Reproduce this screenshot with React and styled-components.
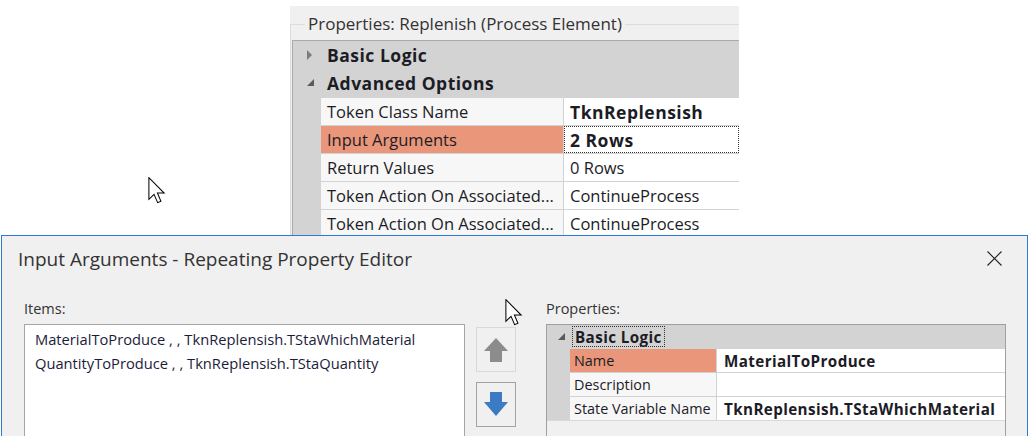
import React from "react";
import styled, { createGlobalStyle } from "styled-components";

const GlobalStyle = createGlobalStyle`
  html, body { margin: 0; padding: 0; background: #fff; }
  body {
    font-family: "Open Sans", "Noto Sans", sans-serif;
    color: #222;
  }
  #root { width: 1033px; height: 436px; }
`;

const LARGE = {
  cat: 28, row: 28, gutter: 27, label: 242,
  font: 16.5, bold: 17.5, ls: 0.5,
  labelPad: 6, valuePad: 6, indent: 14, slot: 20,
};
const SMALL = {
  cat: 23, row: 24, gutter: 22, label: 146,
  font: 14.4, bold: 15.2, ls: 0.4,
  labelPad: 4, valuePad: 7, indent: 11, slot: 14,
};

const Page = styled.div`
  position: relative;
  width: 1033px;
  height: 436px;
  overflow: hidden;
  background: #fff;
  display: flex;
  flex-direction: column;
`;

const TopArea = styled.div`
  flex: none;
  height: 235px;
  display: flex;
  padding-left: 290px;
  box-sizing: border-box;
`;

const PropertiesPanel = styled.div`
  width: 449px;
  margin-top: 6px;
  padding-top: 8px;
  box-sizing: border-box;
  background: #f0f0f0;
  overflow: hidden;
`;

const GroupBox = styled.fieldset`
  margin: 0;
  padding: 6px 0 0 1px;
  min-width: 0;
  height: 100%;
  box-sizing: border-box;
  border: none;
  border-top: 1px solid #dcdcdc;
  border-left: 1px solid #dcdcdc;
`;

const GroupTitle = styled.legend`
  margin-left: 13px;
  padding: 0 3px;
  font-size: 17px;
  line-height: 20px;
  color: #333;
  white-space: nowrap;
`;

const Grid = styled.div`
  background: #d3d3d3;
  border: 1px solid ${(p) => (p.$s === SMALL ? "#a0a0a0" : "#a9a9a9")};
  border-right: ${(p) => (p.$s === SMALL ? "1px solid #a0a0a0" : "none")};
  border-bottom: none;
  color: #1c1c26;
  white-space: nowrap;
`;

const CategoryRow = styled.div`
  display: flex;
  align-items: center;
  height: ${(p) => p.$s.cat}px;
  padding-left: ${(p) => p.$s.indent}px;
  font-size: ${(p) => p.$s.bold}px;
  font-weight: 700;
  letter-spacing: ${(p) => p.$s.ls}px;
`;

const ArrowSlot = styled.span`
  display: flex;
  align-items: center;
  width: ${(p) => p.$s.slot}px;
  flex: none;
`;

const CategoryLabel = styled.span`
  display: flex;
  align-items: center;
  height: ${(p) => p.$s.cat - 2}px;
  padding: 0 ${(p) => (p.$focused ? 3 : 0)}px;
  outline: ${(p) => (p.$focused ? "1px dotted #333" : "none")};
  outline-offset: -1px;
`;

const PropRow = styled.div`
  display: grid;
  grid-template-columns: ${(p) => p.$s.gutter}px ${(p) => p.$s.label}px 1fr;
  column-gap: 1px;
  height: ${(p) => p.$s.row}px;
  padding-top: 1px;
  box-sizing: border-box;
  background: #d3d3d3;
  font-size: ${(p) => p.$s.font}px;
`;

const Gutter = styled.div``;

const LabelCell = styled.div`
  display: flex;
  align-items: center;
  padding-left: ${(p) => p.$s.labelPad}px;
  background: ${(p) => (p.$selected ? "#e9967a" : "#f7f7f7")};
  overflow: hidden;
`;

const ValueCell = styled.div`
  display: flex;
  align-items: center;
  padding-left: ${(p) => p.$s.valuePad}px;
  background: #fff;
  overflow: hidden;
  font-weight: ${(p) => (p.$bold ? 700 : 400)};
  font-size: ${(p) => (p.$bold ? p.$s.bold : p.$s.font)}px;
  letter-spacing: ${(p) => (p.$bold ? p.$s.ls : 0)}px;
  outline: ${(p) => (p.$focused ? "1px dotted #333" : "none")};
  outline-offset: -1px;
`;

const GridFiller = styled.div`
  height: 40px;
  background: #f0f0f0;
  border-top: 1px solid #d8d8d8;
`;

const Dialog = styled.div`
  flex: none;
  width: 1027px;
  height: 220px;
  margin-left: 1px;
  box-sizing: border-box;
  border: 1px solid #2d7bd0;
  background: #f0f0f0;
  display: flex;
  flex-direction: column;
`;

const TitleBar = styled.div`
  display: flex;
  align-items: center;
  height: 45px;
  flex: none;
  padding-left: 16px;
`;

const Title = styled.div`
  flex: 1;
  font-size: 19px;
  color: #333;
  white-space: nowrap;
`;

const CloseButton = styled.div`
  width: 46px;
  height: 45px;
  margin-right: 10px;
  display: flex;
  align-items: center;
  justify-content: center;
`;

const DialogBody = styled.div`
  display: flex;
  align-items: flex-start;
  padding: 18px 0 0 22px;
`;

const Column = styled.div`
  display: flex;
  flex-direction: column;
  width: ${(p) => p.$w}px;
  flex: none;
`;

const FieldLabel = styled.div`
  font-size: 14.5px;
  line-height: 20px;
  height: 20px;
  margin-bottom: 5px;
  color: #333;
`;

const ListBox = styled.div`
  height: 140px;
  box-sizing: border-box;
  border: 1px solid #a5a5a5;
  background: #fff;
  padding: 2px 0 0 10px;
  font-size: 14.7px;
  line-height: 24px;
  color: #1c1c3a;
  white-space: nowrap;
`;

const MoveButtons = styled.div`
  display: flex;
  flex-direction: column;
  gap: 10px;
  margin-left: 11px;
  padding-top: 28px;
  flex: none;
`;

const MoveButton = styled.div`
  width: 40px;
  height: 45px;
  box-sizing: border-box;
  border: 1px solid ${(p) => (p.$disabled ? "#d9d9d9" : "#a3a3a3")};
  background: #f0f0f0;
  display: flex;
  align-items: center;
  justify-content: center;
`;

const RightColumn = styled(Column)`
  margin-left: 30px;
`;

const Cursor = styled.svg`
  position: absolute;
  left: ${(p) => p.$x}px;
  top: ${(p) => p.$y}px;
`;

function Collapsed() {
  return (
    <svg width="6" height="10" viewBox="0 0 6 10">
      <polygon points="0,0 5,5 0,10" fill="#7d7d7d" />
    </svg>
  );
}

function Expanded() {
  return (
    <svg width="8" height="8" viewBox="0 0 8 8">
      <polygon points="7,0 7,7 0,7" fill="#5a5a5a" />
    </svg>
  );
}

function CursorArrow({ x, y }) {
  return (
    <Cursor $x={x} $y={y} width="18" height="27" viewBox="0 0 13 20">
      <path
        d="M0.5,0.5 L0.5,16.5 L4.3,12.8 L7,19 L9.4,18 L6.8,11.9 L11.8,11.9 Z"
        fill="#fff"
        stroke="#000"
        strokeWidth="0.75"
        strokeLinejoin="miter"
      />
    </Cursor>
  );
}

const topRows = [
  { label: "Token Class Name", value: "TknReplensish", bold: true },
  { label: "Input Arguments", value: "2 Rows", bold: true, selected: true, focused: true },
  { label: "Return Values", value: "0 Rows" },
  { label: "Token Action On Associated...", value: "ContinueProcess" },
  { label: "Token Action On Associated...", value: "ContinueProcess" },
];

const editorRows = [
  { label: "Name", value: "MaterialToProduce", bold: true, selected: true },
  { label: "Description", value: "" },
  { label: "State Variable Name", value: "TknReplensish.TStaWhichMaterial", bold: true },
];

function PropRows({ rows, s }) {
  return rows.map((r, i) => (
    <PropRow key={i} $s={s}>
      <Gutter />
      <LabelCell $s={s} $selected={r.selected}>{r.label}</LabelCell>
      <ValueCell $s={s} $bold={r.bold} $focused={r.focused}>{r.value}</ValueCell>
    </PropRow>
  ));
}

export default function App() {
  return (
    <>
      <GlobalStyle />
      <Page>
        <TopArea>
          <PropertiesPanel>
            <GroupBox>
              <GroupTitle>Properties: Replenish (Process Element)</GroupTitle>
              <Grid $s={LARGE}>
                <CategoryRow $s={LARGE}>
                  <ArrowSlot $s={LARGE}><Collapsed /></ArrowSlot>
                  <CategoryLabel $s={LARGE}>Basic Logic</CategoryLabel>
                </CategoryRow>
                <CategoryRow $s={LARGE}>
                  <ArrowSlot $s={LARGE}><Expanded /></ArrowSlot>
                  <CategoryLabel $s={LARGE}>Advanced Options</CategoryLabel>
                </CategoryRow>
                <PropRows rows={topRows} s={LARGE} />
              </Grid>
            </GroupBox>
          </PropertiesPanel>
        </TopArea>

        <Dialog>
          <TitleBar>
            <Title>Input Arguments - Repeating Property Editor</Title>
            <CloseButton>
              <svg width="15" height="15" viewBox="0 0 15 15">
                <path d="M0.5,0.5 L14.5,14.5 M14.5,0.5 L0.5,14.5" stroke="#222" strokeWidth="1.1" />
              </svg>
            </CloseButton>
          </TitleBar>
          <DialogBody>
            <Column $w={441}>
              <FieldLabel>Items:</FieldLabel>
              <ListBox>
                <div>MaterialToProduce , , TknReplensish.TStaWhichMaterial</div>
                <div>QuantityToProduce , , TknReplensish.TStaQuantity</div>
              </ListBox>
            </Column>
            <MoveButtons>
              <MoveButton $disabled>
                <svg width="24" height="24" viewBox="0 0 24 24">
                  <polygon points="12,0 24,13 18,13 18,24 6,24 6,13 0,13" fill="#8c8c8c" />
                </svg>
              </MoveButton>
              <MoveButton>
                <svg width="24" height="25" viewBox="0 0 24 25">
                  <polygon points="6,0 18,0 18,10 24,10 12,24 0,10 6,10" fill="#3b7bc4" />
                </svg>
              </MoveButton>
            </MoveButtons>
            <RightColumn $w={460}>
              <FieldLabel>Properties:</FieldLabel>
              <Grid $s={SMALL}>
                <CategoryRow $s={SMALL}>
                  <ArrowSlot $s={SMALL}><Expanded /></ArrowSlot>
                  <CategoryLabel $s={SMALL} $focused>Basic Logic</CategoryLabel>
                </CategoryRow>
                <PropRows rows={editorRows} s={SMALL} />
                <GridFiller />
              </Grid>
            </RightColumn>
          </DialogBody>
        </Dialog>

        <CursorArrow x={148} y={177} />
        <CursorArrow x={505} y={299} />
      </Page>
    </>
  );
}
